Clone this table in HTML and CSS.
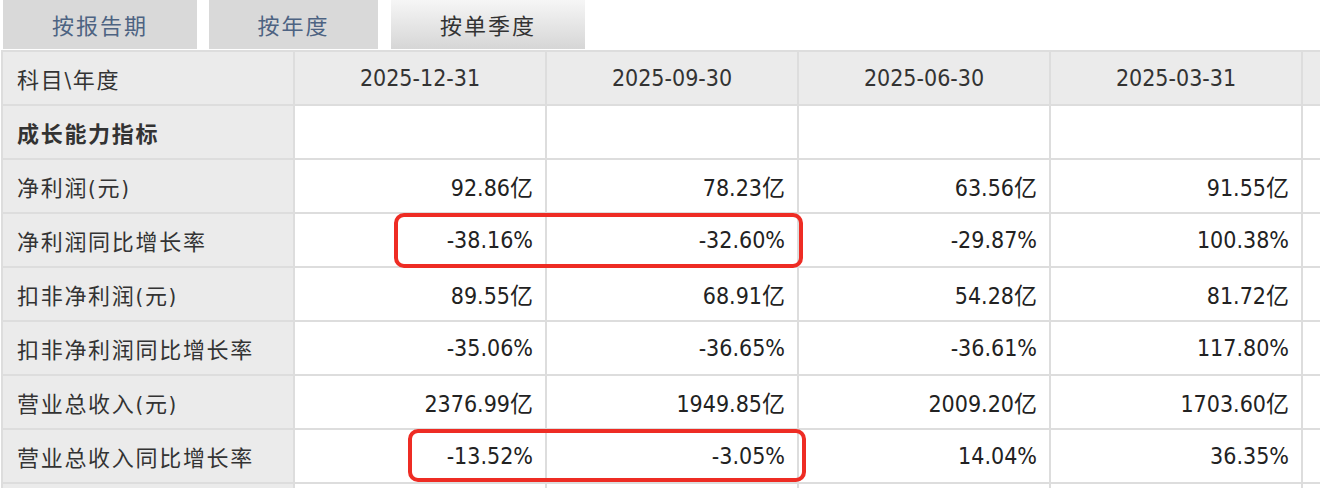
FILE: index.html
```html
<!DOCTYPE html>
<html lang="zh-CN">
<head>
<meta charset="utf-8">
<title>成长能力指标</title>
<link rel="stylesheet" href="styles.css">
</head>
<body>
<div class="page">
  <div class="tabs">
    <div class="tab tab-1">按报告期</div>
    <div class="tab tab-2">按年度</div>
    <div class="tab tab-3 active">按单季度</div>
  </div>
  <div class="grid">
    <div class="cell head label">科目\年度</div>
    <div class="cell head date">2025-12-31</div>
    <div class="cell head date">2025-09-30</div>
    <div class="cell head date">2025-06-30</div>
    <div class="cell head date">2025-03-31</div>
    <div class="cell head date"></div>

    <div class="cell label bold">成长能力指标</div>
    <div class="cell num"></div>
    <div class="cell num"></div>
    <div class="cell num"></div>
    <div class="cell num"></div>
    <div class="cell num"></div>

    <div class="cell label">净利润(元)</div>
    <div class="cell num">92.86亿</div>
    <div class="cell num">78.23亿</div>
    <div class="cell num">63.56亿</div>
    <div class="cell num">91.55亿</div>
    <div class="cell num"></div>

    <div class="cell label">净利润同比增长率</div>
    <div class="cell num">-38.16%</div>
    <div class="cell num">-32.60%</div>
    <div class="cell num">-29.87%</div>
    <div class="cell num">100.38%</div>
    <div class="cell num"></div>

    <div class="cell label">扣非净利润(元)</div>
    <div class="cell num">89.55亿</div>
    <div class="cell num">68.91亿</div>
    <div class="cell num">54.28亿</div>
    <div class="cell num">81.72亿</div>
    <div class="cell num"></div>

    <div class="cell label">扣非净利润同比增长率</div>
    <div class="cell num">-35.06%</div>
    <div class="cell num">-36.65%</div>
    <div class="cell num">-36.61%</div>
    <div class="cell num">117.80%</div>
    <div class="cell num"></div>

    <div class="cell label">营业总收入(元)</div>
    <div class="cell num">2376.99亿</div>
    <div class="cell num">1949.85亿</div>
    <div class="cell num">2009.20亿</div>
    <div class="cell num">1703.60亿</div>
    <div class="cell num"></div>

    <div class="cell label">营业总收入同比增长率</div>
    <div class="cell num">-13.52%</div>
    <div class="cell num">-3.05%</div>
    <div class="cell num">14.04%</div>
    <div class="cell num">36.35%</div>
    <div class="cell num"></div>

    <div class="cell label"></div>
    <div class="cell num"></div>
    <div class="cell num"></div>
    <div class="cell num"></div>
    <div class="cell num"></div>
    <div class="cell num"></div>
  </div>
  <div class="mark mark-1"></div>
  <div class="mark mark-2"></div>
</div>
</body>
</html>
```

FILE: styles.css
```css
html, body {
  margin: 0;
  padding: 0;
  background: #ffffff;
  overflow: hidden;
}

.page {
  position: relative;
  width: 1320px;
  height: 488px;
  overflow: hidden;
  font-family: "DejaVu Sans Condensed", "DejaVu Sans", "Noto Sans CJK SC", sans-serif;
  font-stretch: condensed;
}

.tabs {
  display: flex;
  height: 49px;
  margin-bottom: 1px;
  padding-left: 3px;
}

.tab {
  display: flex;
  align-items: center;
  justify-content: center;
  background: #d9d9d9;
  color: #4d6382;
  font-family: "Noto Sans CJK SC", sans-serif;
  font-size: 22px;
  letter-spacing: 2px;
  padding-bottom: 2px;
  box-sizing: border-box;
}

.tab-1 { width: 194px; }
.tab-2 { width: 169px; margin-left: 12px; }
.tab-3 { width: 194px; margin-left: 13px; }

.tab.active {
  color: #333333;
  background: linear-gradient(#f6f6f6, #d6d6d6);
}

.grid {
  display: grid;
  grid-template-columns: 290px repeat(5, 250px);
  grid-auto-rows: 52px;
  gap: 2px;
  padding: 2px 0 0 2px;
  margin-left: 1px;
  background: #dddddd;
  width: max-content;
}

.cell {
  display: flex;
  align-items: center;
  background: #ffffff;
  color: #222222;
  font-size: 23px;
  box-sizing: border-box;
  white-space: nowrap;
}

.head {
  background: #ebebeb;
  color: #333333;
}

.date {
  justify-content: center;
}

.label {
  background: #ebebeb;
  color: #333333;
  padding-left: 14px;
  font-size: 22px;
  letter-spacing: 1.7px;
}

.label.bold {
  font-weight: bold;
}

.num {
  justify-content: flex-end;
  padding-right: 12px;
}

.mark {
  position: absolute;
  border: 4px solid #ee2c24;
  border-radius: 10px;
  box-sizing: border-box;
}

.mark-1 {
  left: 394px;
  top: 213px;
  width: 409px;
  height: 55px;
}

.mark-2 {
  left: 408px;
  top: 429px;
  width: 398px;
  height: 53px;
}
```
